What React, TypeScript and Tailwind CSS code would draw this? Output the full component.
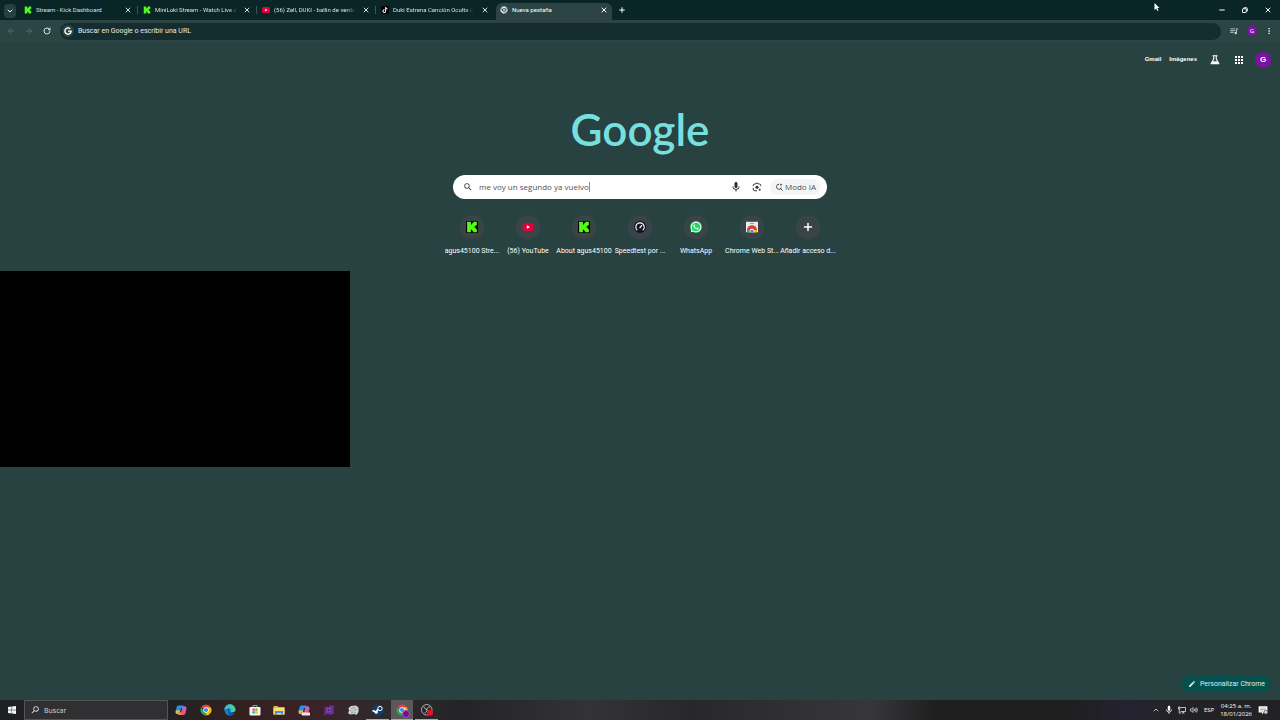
import { useState, type ReactNode } from "react";
import clsx from "clsx";
import {
  ArrowLeft,
  ArrowRight,
  ChevronDown,
  ChevronUp,
  Minus,
  MoreVertical,
  Plus,
  RotateCw,
  X,
} from "lucide-react";
import { FaGoogle, FaTiktok, FaWhatsapp } from "react-icons/fa";
import { MdApps, MdEdit, MdMic, MdOutlineQueueMusic, MdSearch } from "react-icons/md";

function KickIcon({ className }: { className?: string }) {
  return (
    <svg viewBox="0 0 16 16" className={className} aria-hidden="true">
      <path
        fill="#53fc18"
        d="M1.500 1h5v3.500h1.500V3h1.500V1h5v4.500h-1.500V7h-1.500v2H13v1.500h1.500V15h-5v-2H8v-1.500H6.500V15h-5z"
      />
    </svg>
  );
}

function YouTubeIcon({ className }: { className?: string }) {
  return (
    <svg viewBox="0 0 16 12" className={className} aria-hidden="true">
      <rect width="16" height="12" rx="3" fill="#e3003a" />
      <path d="M6.200 3.300 11 6l-4.800 2.700z" fill="#fff" />
    </svg>
  );
}

function ChromeIcon({ className, mono }: { className?: string; mono?: boolean }) {
  return (
    <svg viewBox="0 0 24 24" className={className} aria-hidden="true">
      <path d="M12 12 2.470 6.500A11 11 0 0 1 21.530 6.500H12z" fill={mono ? "#d7e2e2" : "#ea4335"} />
      <path d="M12 12V6.500h9.530A11 11 0 0 1 12 23z" fill={mono ? "#b9c8c8" : "#fbbc04"} />
      <path d="M12 12v11A11 11 0 0 1 2.470 6.500L7.240 14.700z" fill={mono ? "#d7e2e2" : "#34a853"} />
      <path d="m7.200 14.800 4.800 2.700-3.200 5.200z" fill={mono ? "#d7e2e2" : "#34a853"} />
      <circle cx="12" cy="12" r="5.500" fill={mono ? "#294242" : "#fff"} />
      <circle cx="12" cy="12" r={mono ? 3 : 4.2} fill={mono ? "#d7e2e2" : "#4285f4"} />
    </svg>
  );
}

function SpeedtestIcon({ className }: { className?: string }) {
  return (
    <svg viewBox="0 0 16 16" className={className} aria-hidden="true">
      <circle cx="8" cy="8" r="8" fill="#141526" />
      <path d="M4.300 12.300a5.600 5.600 0 1 1 7.400 0" fill="none" stroke="#fff" strokeWidth="1.500" />
      <path d="m7.500 9.500 3-4" stroke="#fff" strokeWidth="1.600" />
    </svg>
  );
}

function WhatsAppIcon({ className }: { className?: string }) {
  return (
    <span className={clsx("flex items-center justify-center rounded-full bg-[#25d366]", className)}>
      <FaWhatsapp className="size-3 shrink-0 text-white" />
    </span>
  );
}

function WebStoreIcon({ className }: { className?: string }) {
  return (
    <svg viewBox="0 0 16 16" className={className} aria-hidden="true">
      <path d="M0 1h16v14H0z" fill="#e8eaed" />
      <path d="M5.500 2.500h5V4h-5z" fill="#9aa0a6" />
      <path d="M1.500 15V12a6.500 6.500 0 0 1 13 0v3z" fill="#e53935" />
      <path d="M1.500 15v-3l1-2.500L7 15z" fill="#34a853" />
      <path d="M14.500 15v-3H10l-1 3z" fill="#fbbc04" />
      <path d="M4.800 15v-1.500a3.200 3.200 0 0 1 6.400 0V15z" fill="#fff" />
      <path d="M5.700 15v-1a2.300 2.300 0 0 1 4.600 0v1z" fill="#4285f4" />
    </svg>
  );
}

function FlaskIcon({ className }: { className?: string }) {
  return (
    <svg viewBox="0 0 24 24" className={className} aria-hidden="true">
      <path d="M7 3.500h10M9.500 4v6L4 19.500h16L14.500 10V4" fill="none" stroke="currentColor" strokeWidth="2.200" strokeLinejoin="round" />
      <path d="M8 14.500h8l4 5.500H4z" fill="currentColor" />
    </svg>
  );
}

function LensIcon({ className }: { className?: string }) {
  return (
    <svg viewBox="0 0 24 24" className={className} fill="none" stroke="currentColor" strokeWidth="2.400" aria-hidden="true">
      <path d="M3 10V8a3 3 0 0 1 3-3h2l1.500-2h5L16 5h2a3 3 0 0 1 3 3v2M3 14v3a4 4 0 0 0 4 4h5" />
      <circle cx="12" cy="12.500" r="3.800" fill="currentColor" stroke="none" />
      <circle cx="18.500" cy="18.500" r="2.300" fill="currentColor" stroke="none" />
    </svg>
  );
}

function LensSearchIcon({ className }: { className?: string }) {
  return (
    <svg viewBox="0 0 16 16" className={className} fill="none" stroke="#3c4043" strokeWidth="2" aria-hidden="true">
      <path d="M8 2.500a5 5 0 1 0 3.500 8.500A5 5 0 0 0 12.500 9" />
      <path d="m10.500 10.500 4.500 4.500" />
      <path d="M12 0c.4 2.500 1 3.300 3.500 3.700-2.500.4-3.100 1.200-3.500 3.700-.4-2.500-1-3.300-3.500-3.700C11 3.300 11.600 2.500 12 0z" fill="#3c4043" stroke="none" />
    </svg>
  );
}

function WindowsIcon() {
  return (
    <svg viewBox="0 0 16 16" className="size-2" fill="#f4f4f4" aria-hidden="true">
      <path d="M0 2.200 7.300 1.200v6.400H0zM8.100 1.100 16 0v7.600H8.100zM0 8.400h7.300v6.400L0 13.800zM8.100 8.400H16V16l-7.900-1.100z" />
    </svg>
  );
}

function CopilotIcon({ badge }: { badge?: boolean }) {
  return (
    <svg viewBox="0 0 24 24" className="size-3" aria-hidden="true">
      <path d="M7 3h8c2 0 2.500 1 3 3l.5 2H12L9.500 17c-.5 2-1.500 3-3.500 3H4.500C1.500 20 1 17.500 1.500 14L3 7c.7-3 2-4 4-4z" fill="#2a8fe8" />
      <path d="M1.500 13 1.300 15c-.3 3 .7 5 3.200 5H6c2 0 3-1 3.500-3l1.200-4z" fill="#d9c83e" />
      <path d="M17 22H9c-2 0-2.500-1-3-3l-.5-2H12l2.500-9c.5-2 1.500-3 3.500-3h1.500c3 0 3.500 2.500 3 6L21 18c-.7 3-2 4-4 4z" fill="#ea5578" />
      <path d="M13.500 12 14.500 8c.5-2 1.500-3 3.500-3h1.500c3 0 3.500 2.500 3 6l-.3 1z" fill="#a566e8" />
      <path d="m5.500 17 .5 2c.5 2 1 3 3 3h3l1.300-5z" fill="#f58a3c" />
      {badge && <rect x="8" y="17" width="16" height="6" rx="1" fill="#e8e8ee" />}
    </svg>
  );
}

function EdgeIcon() {
  return (
    <svg viewBox="0 0 24 24" className="size-3" aria-hidden="true">
      <circle cx="12" cy="12" r="11" fill="#1683d8" />
      <path d="M1 12A11 11 0 0 1 23 11c.3 4-3 6-6 6-2.500 0-4-1-3.500-2.500C15 12 13 8.500 9 8.500 5 8.500 1.500 10.500 1 12z" fill="#3fcfa0" />
      <path d="M1 12A11 11 0 0 1 14 1.200C9 3 8 6 9 8.500 5 8.500 1.500 10.500 1 12z" fill="#35b8e8" />
      <path d="M9 9c-4 4-1 12 6 13.500 3-.8 5.500-2.500 7-5-6 3-12 .5-12-4 0-1.700.8-2.800 1.800-3.500z" fill="#0c4fa0" />
      <path d="M13.500 14.500c-.5 1.500 1 2.500 3.500 2.500 3 0 5.500-2 6-4v4.500l-1 1c-5 1-9-.5-8.500-4z" fill="#242428" />
    </svg>
  );
}

function StoreIcon() {
  return (
    <svg viewBox="0 0 24 24" className="size-3" aria-hidden="true">
      <path d="M8 6V3h8v3" fill="none" stroke="#49b6e8" strokeWidth="2" />
      <rect x="1" y="6" width="22" height="17" rx="2" fill="#f2f4f5" />
      <path d="M7 9h4.500v4.500H7z" fill="#f25022" />
      <path d="M12.500 9H17v4.500h-4.500z" fill="#7fba00" />
      <path d="M7 14.500h4.500V19H7z" fill="#00a4ef" />
      <path d="M12.500 14.500H17V19h-4.500z" fill="#ffb900" />
    </svg>
  );
}

function FolderIcon() {
  return (
    <svg viewBox="0 0 24 24" className="size-3" aria-hidden="true">
      <path d="M1 4h8l2 2h12v15H1z" fill="#e9b13a" />
      <path d="M1 8h22v13H1z" fill="#fbdc7c" />
      <path d="M4 14h16v7h-4v-3H8v3H4z" fill="#3f97d8" />
    </svg>
  );
}

function PurpleAppIcon() {
  return (
    <svg viewBox="0 0 24 24" className="size-3" aria-hidden="true">
      <path d="m4 5 8 1 3-4 7 2-1 9 1 6-8 3-4-2-8 2 1-8z" fill="#6a2d98" />
      <path d="m8 8 9-1-2 9-7 1z" fill="#8e3fb8" />
      <path d="m10 10 5 2-5 3z" fill="#4c1b72" />
    </svg>
  );
}

function ChatAppIcon() {
  return (
    <svg viewBox="0 0 24 24" className="size-3" aria-hidden="true">
      <path d="m3 8 5-4 10-1 5 4v9l-4 6-4-2-9 1-4-3 2-4z" fill="#cdd1d2" />
      <path d="m8 9 9-2M5 13l6 1M13 12l7-1M8 18l5-2 5 2" stroke="#8b9194" strokeWidth="1.500" fill="none" />
    </svg>
  );
}

function SteamIcon() {
  return (
    <svg viewBox="0 0 24 24" className="size-3" aria-hidden="true">
      <circle cx="12" cy="12" r="11.500" fill="#133c68" />
      <path d="m1 13 7 3 5-6" fill="none" stroke="#fff" strokeWidth="3.500" />
      <circle cx="16" cy="9" r="4.300" fill="#133c68" stroke="#fff" strokeWidth="2" />
      <circle cx="8.500" cy="16.500" r="3" fill="#fff" />
    </svg>
  );
}

function ObsIcon() {
  return (
    <svg viewBox="0 0 24 24" className="size-3" aria-hidden="true">
      <circle cx="11.500" cy="11.500" r="10.500" fill="#252527" stroke="#d8d8d8" strokeWidth="1.500" />
      <path d="M6 5c1 4 3 6 6 6M18 6c-4 0-6 2-6 5M7 18c3-1 5-3 5-7" fill="none" stroke="#d8d8d8" strokeWidth="1.600" />
      <circle cx="18" cy="17.500" r="6" fill="#f01020" />
    </svg>
  );
}

function RestoreIcon() {
  return (
    <svg viewBox="0 0 12 12" className="size-1.5" fill="none" stroke="#fff" strokeWidth="2" aria-hidden="true">
      <rect x="1" y="3.500" width="7.500" height="7.500" rx="1" />
      <path d="M3.500 1.500H9A1.500 1.500 0 0 1 10.500 3v5.500" />
    </svg>
  );
}

function NetworkIcon() {
  return (
    <svg viewBox="0 0 16 16" className="size-2" fill="none" stroke="#fff" strokeWidth="1.400" aria-hidden="true">
      <path d="M5 3h10v8H5M8 14h5M10.500 11v3M1 2h3v4H1zM2.500 6v8h4" />
    </svg>
  );
}

function VolumeIcon() {
  return (
    <svg viewBox="0 0 16 16" className="size-2" fill="none" stroke="#fff" strokeWidth="1.300" aria-hidden="true">
      <path d="M1 6h2l3-3v10l-3-3H1zM8.500 6q1.500 2 0 4M10.800 4.500q2.500 3.500 0 7M13 3q3.500 5 0 10" />
    </svg>
  );
}

function NotificationIcon() {
  return (
    <svg viewBox="0 0 16 16" className="size-2.5" aria-hidden="true">
      <path d="M1 2h14v10H9l-2.500 3v-3H1z" fill="#fff" />
      <path d="M3.500 5h9M3.500 7.200h9M3.500 9.400h5" stroke="#707074" strokeWidth=".8" />
      <circle cx="12.500" cy="11.500" r="3" fill="#d8d8dc" stroke="#303034" />
    </svg>
  );
}

const tabs = [
  { title: "Stream - Kick Dashboard", icon: <KickIcon className="size-2" /> },
  { title: "MiniLoki Stream - Watch Live o", icon: <KickIcon className="size-2" /> },
  { title: "(56) Zell, DUKI - ballin de verda", icon: <YouTubeIcon className="h-1.5 w-2" /> },
  {
    title: "Duki Estrena Canción Oculta q",
    icon: (
      <span className="flex size-2 items-center justify-center rounded-xs bg-black">
        <FaTiktok className="size-1.5 text-white" />
      </span>
    ),
  },
  { title: "Nueva pestaña", icon: <ChromeIcon mono className="size-2" />, active: true },
];

const shortcuts: { label: string; icon: ReactNode }[] = [
  { label: "agus45100 Stre...", icon: <KickIcon className="size-3 bg-black" /> },
  { label: "(56) YouTube", icon: <YouTubeIcon className="h-2 w-3" /> },
  { label: "About agus45100", icon: <KickIcon className="size-3 bg-black" /> },
  { label: "Speedtest por ...", icon: <SpeedtestIcon className="size-3" /> },
  { label: "WhatsApp", icon: <WhatsAppIcon className="size-3" /> },
  { label: "Chrome Web St...", icon: <WebStoreIcon className="size-3" /> },
  { label: "Añadir acceso d...", icon: <Plus className="size-3 text-white" strokeWidth={3} /> },
];

const apps: { name: string; icon: ReactNode; open?: boolean; active?: boolean }[] = [
  { name: "Copilot", icon: <CopilotIcon /> },
  { name: "Google Chrome", icon: <ChromeIcon className="size-3" /> },
  { name: "Microsoft Edge", icon: <EdgeIcon /> },
  { name: "Microsoft Store", icon: <StoreIcon /> },
  { name: "Explorador de archivos", icon: <FolderIcon /> },
  { name: "Microsoft 365 Copilot", icon: <CopilotIcon badge /> },
  { name: "Editor", icon: <PurpleAppIcon /> },
  { name: "Juego", icon: <ChatAppIcon /> },
  { name: "Steam", icon: <SteamIcon />, open: true },
  {
    name: "Nueva pestaña - Google Chrome",
    icon: (
      <span className="relative flex">
        <ChromeIcon className="size-3" />
        <span className="absolute -right-0.5 -bottom-0.5 size-2 rounded-full border border-[#a24fc0] bg-[#6a1292]" />
      </span>
    ),
    open: true,
    active: true,
  },
  { name: "OBS Studio", icon: <ObsIcon />, open: true },
];

function TabStrip() {
  return (
    <div className="flex h-5 items-end bg-[#0a2526] pl-1 font-['Roboto',sans-serif]">
      <button aria-label="Buscar pestañas" className="mb-0.5 flex h-3.5 w-3 items-center justify-center rounded-sm bg-[#24403f]">
        <ChevronDown className="size-2 text-white" strokeWidth={3} />
      </button>
      <div className="ml-1 flex h-[17px]">
        {tabs.map((tab, i) => (
          <div
            key={tab.title}
            className={clsx(
              "flex items-center pb-[3px] pl-1",
              tab.active ? "w-[116px] rounded-t-md bg-[#2c4444] text-white" : "w-[119px] text-[#d3e0e0]",
            )}
          >
            <button className="flex min-w-0 flex-1 items-center gap-1">
              {tab.icon}
              <span
                className={clsx(
                  "text-[6px] leading-2 whitespace-nowrap",
                  i > 0 && !tab.active && "[mask-image:linear-gradient(to_right,black_90%,transparent)]",
                )}
              >
                {tab.title}
              </span>
            </button>
            <button aria-label="Cerrar pestaña" className={tab.active ? "mr-1" : "mr-[5px]"}>
              <X className="size-2" strokeWidth={3} />
            </button>
            {!tab.active && <span className={clsx("mr-px h-2 w-px", i < 3 && "bg-[#3a5656]")} />}
          </div>
        ))}
      </div>
      <button aria-label="Nueva pestaña" className="mb-1.5 ml-1.5">
        <Plus className="size-2 text-white" strokeWidth={3} />
      </button>
      <div className="mr-2 mb-1.5 ml-auto flex items-center gap-4 text-white">
        <button aria-label="Minimizar">
          <Minus className="size-2" strokeWidth={3} />
        </button>
        <button aria-label="Restaurar">
          <RestoreIcon />
        </button>
        <button aria-label="Cerrar">
          <X className="size-2" strokeWidth={3} />
        </button>
      </div>
    </div>
  );
}

function Toolbar() {
  return (
    <div className="flex h-[22px] items-center bg-[#2c4444] px-[7px]">
      <div className="flex w-[53px] items-center gap-2.5">
        <button aria-label="Atrás">
          <ArrowLeft className="size-2 text-[#5f7777]" strokeWidth={2.5} />
        </button>
        <button aria-label="Adelante">
          <ArrowRight className="size-2 text-[#5f7777]" strokeWidth={2.5} />
        </button>
        <button aria-label="Recargar">
          <RotateCw className="size-2 text-[#d3e0e0]" strokeWidth={3} />
        </button>
      </div>
      <label className="flex h-[17px] flex-1 items-center gap-1 rounded-full bg-[#152d2e] pl-0.5">
        <span className="flex size-3 items-center justify-center rounded-full bg-[#2c4444]">
          <FaGoogle className="size-2 text-white" />
        </span>
        <input
          aria-label="Barra de direcciones"
          placeholder="Buscar en Google o escribir una URL"
          className="h-3 flex-1 bg-transparent font-['Roboto',sans-serif] text-[7px] leading-3 outline-none placeholder:text-[#e4ecec]"
        />
      </label>
      <div className="ml-2 flex items-center gap-2">
        <button aria-label="Control multimedia">
          <MdOutlineQueueMusic className="size-2.5 text-[#c9d6d6]" />
        </button>
        <button aria-label="Perfil" className="size-2.5 rounded-full bg-[#7b12a1] text-center text-[6px] leading-2.5 text-white">
          G
        </button>
        <button aria-label="Más opciones">
          <MoreVertical className="size-2 text-[#d3e0e0]" strokeWidth={3} />
        </button>
      </div>
    </div>
  );
}

function NewTabPage() {
  const [query, setQuery] = useState("me voy un segundo ya vuelvo");

  return (
    <main className="relative flex flex-1 flex-col items-center bg-[#284242]">
      <nav className="flex h-[35px] w-full items-center justify-end gap-2 pr-[9px] font-['Liberation_Sans',sans-serif] text-[6px] font-bold text-white">
        <a href="#gmail">Gmail</a>
        <a href="#imagenes">Imágenes</a>
        <button aria-label="Search Labs" className="ml-1">
          <FlaskIcon className="size-3" />
        </button>
        <button aria-label="Aplicaciones de Google" className="ml-1">
          <MdApps className="size-3" />
        </button>
        <button aria-label="Cuenta de Google" className="ml-0.5 size-4 rounded-full bg-[#7b12a1] text-[8px]">
          G
        </button>
      </nav>

      <h1 className="mt-6 h-[70px] font-['Lato',sans-serif] text-[44px] leading-[56px] font-semibold text-[#78dfdf]">Google</h1>

      <form
        className="mt-1 flex h-6 w-[374px] items-center rounded-full bg-white pr-1.5 pl-2.5"
        onSubmit={(e) => e.preventDefault()}
      >
        <MdSearch className="size-2.5 text-[#3c4043]" />
        <span className="ml-1.5 flex flex-1 items-center">
          <input
            aria-label="Buscar en Google"
            value={query}
            onChange={(e) => setQuery(e.target.value)}
            className="field-sizing-content h-4 text-[8px] leading-4 text-[#4d5156] outline-none"
          />
          <span className="h-2.5 w-px bg-[#8a8d90]" />
        </span>
        <button type="button" aria-label="Buscar por voz">
          <MdMic className="size-3 text-[#303134]" />
        </button>
        <button type="button" aria-label="Buscar por imagen" className="ml-2.5">
          <LensIcon className="size-2.5 text-[#303134]" />
        </button>
        <button type="button" className="ml-2 flex h-4 w-[51px] items-center justify-center gap-0.5 rounded-full bg-[#f3f5f6] text-[8px] text-[#4d5156]">
          <LensSearchIcon className="size-2" />
          Modo IA
        </button>
      </form>

      <div className="mt-4 flex">
        {shortcuts.map((item) => (
          <a
            key={item.label}
            href="#acceso"
            className="flex w-14 flex-col items-center gap-1.5 font-['Roboto',sans-serif] text-[7px] leading-3 whitespace-nowrap text-white"
          >
            <span className="flex size-6 items-center justify-center rounded-full bg-[#3a4447]">{item.icon}</span>
            {item.label}
          </a>
        ))}
      </div>

      <div className="absolute top-[229px] left-0 h-[196px] w-[350px] bg-black" />

      <button className="absolute right-[9px] bottom-2 flex h-4 items-center gap-1 rounded-full bg-[#05504c] px-1.5 font-['Roboto',sans-serif] text-[7px] text-[#d7f3ef]">
        <MdEdit className="size-2" />
        Personalizar Chrome
      </button>
    </main>
  );
}

function Taskbar() {
  return (
    <footer className="flex h-5 items-center bg-[linear-gradient(to_right,#1e2024_0%,#222224_14%,#35201f_19%,#3a2328_25%,#2e2a2c_30%,#242427_36%,#333337_46%,#28282a_54%,#37373b_68%,#1f1f20_73%,#1f1f20_84%,#262230_88%,#222225_93%)] text-white">
      <button aria-label="Inicio" className="flex h-full w-6 items-center justify-center">
        <WindowsIcon />
      </button>
      <label className="flex h-full w-36 items-center gap-1 border border-[#555558] bg-[#303032] pl-[5px]">
        <MdSearch className="size-2.5 -scale-x-100 text-[#e0e0e0]" />
        <input aria-label="Buscar en Windows" placeholder="Buscar" className="h-4 w-24 bg-transparent text-[7px] outline-none placeholder:text-[#d8d8da]" />
      </label>
      <div className="ml-px grid h-full w-[270px] grid-cols-11">
        {apps.map((app) => (
          <button
            key={app.name}
            aria-label={app.name}
            className={clsx(
              "mx-px flex items-center justify-center border-y",
              app.active ? "border-t-[#5c5759] bg-[#5c5759]" : "border-t-transparent",
              app.open ? "border-b-[#76b9ed]" : "border-b-transparent",
            )}
          >
            {app.icon}
          </button>
        ))}
      </div>
      <div className="ml-auto flex items-center gap-1 pr-3 text-[6px] leading-2">
        <ChevronUp className="size-2" />
        <MdMic className="size-2.5" />
        <NetworkIcon />
        <VolumeIcon />
        <span className="ml-0.5">ESP</span>
        <div className="ml-0.5 text-center">
          <div>04:25 a. m.</div>
          <div>18/01/2026</div>
        </div>
        <span className="ml-0.5">
          <NotificationIcon />
        </span>
      </div>
    </footer>
  );
}

export default function App() {
  return (
    <div className="relative flex min-h-screen flex-col font-['Open_Sans',sans-serif]">
      <TabStrip />
      <Toolbar />
      <NewTabPage />
      <Taskbar />
      <svg viewBox="0 0 12 18" className="absolute top-0.5 right-[120px] h-2.5 w-1.5" aria-hidden="true">
        <path d="M1 1v14l3.500-3 2.300 5 2.200-1-2.200-5H11z" fill="#fff" />
      </svg>
    </div>
  );
}
